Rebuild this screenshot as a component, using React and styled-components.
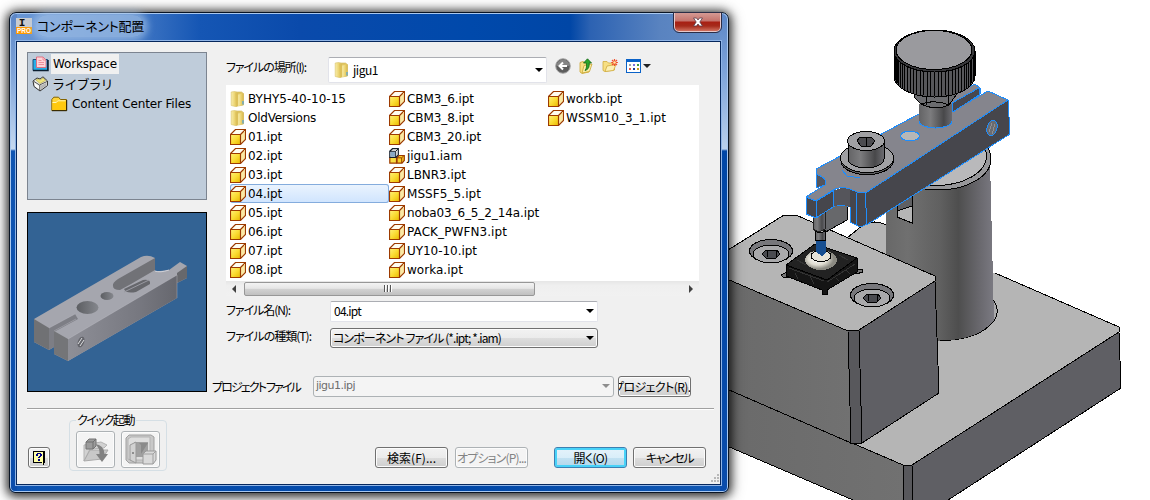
import React, { useLayoutEffect, useRef, useState } from "react";
import styled, { createGlobalStyle, css } from "styled-components";

const GlobalStyle = createGlobalStyle`
  * { box-sizing: border-box; }
  html, body { margin: 0; padding: 0; background: #fff; }
  body { overflow: hidden; }
`;

const uiFont = `"Noto Sans CJK JP", "Liberation Sans", sans-serif`;
const listFont = `"DejaVu Sans", "Noto Sans CJK JP", sans-serif`;

const Desktop = styled.div`
  position: relative;
  width: 1150px;
  height: 500px;
  overflow: hidden;
  background: #fff;
`;

const Scene = styled.svg`
  position: absolute;
  top: 0;
  left: 720px;
  display: block;
`;

/* ---------- text ---------- */

const TextSpan = styled.span`
  display: inline-block;
  flex: none;
  white-space: pre;
  font-family: ${(p) => (p.$list ? listFont : uiFont)};
  font-size: ${(p) => p.$size || 12}px;
  line-height: 18px;
  font-feature-settings: ${(p) => (p.$list ? "normal" : '"palt"')};
  color: ${(p) => p.$color || "#000"};
`;

/* Spreads a string over a fixed advance width by adjusting its tracking. */
function Text({ children, width, size, list, color }) {
  const ref = useRef(null);
  const [tracking, setTracking] = useState(0);
  useLayoutEffect(() => {
    if (!width) return;
    const natural = ref.current.getBoundingClientRect().width;
    setTracking((width - natural) / children.length);
  }, [width, children]);
  return (
    <TextSpan ref={ref} $size={size} $list={list} $color={color} style={{ letterSpacing: tracking }}>
      {children}
    </TextSpan>
  );
}

/* ---------- window ---------- */

const Window = styled.section`
  position: absolute;
  left: 9px;
  top: 12px;
  width: 720px;
  height: 481px;
  padding: 1px 7px 7px 6px;
  border: 1px solid #0a1524;
  border-radius: 7px 7px 6px 6px;
  background:
    linear-gradient(180deg, #5b86c6 0, #7ea4da 60px, #c6d9f0 136px, #0f55b2 138px, #0a4cab 100%) 0 0 / 7px 100% no-repeat,
    linear-gradient(180deg, #5b86c6 0, #7ea4da 60px, #b9d0ec 136px, #0046a6 138px, #0a4cab 100%) 100% 0 / 8px 100% no-repeat,
    linear-gradient(90deg, #6b98d6 0, #4d80c8 110px, #1556b4 190px, #0a4aab 290px, #0049ab 460px, #0046a6 560px, #2c62b2 580px, #5983c0 650px, #6790c8 100%) 0 0 / 100% 30px no-repeat,
    linear-gradient(90deg, #0d54b2, #0046a6 60%, #1259b4);
  box-shadow: inset 0 0 0 1px #a9c8ef, 0 1px 10px 2px rgba(0, 0, 0, 0.75), 0 2px 16px 2px rgba(0, 0, 0, 0.3);
  display: flex;
  flex-direction: column;
`;

const TitleBar = styled.header`
  flex: none;
  height: 26px;
  display: flex;
  align-items: flex-start;
`;

const AppIcon = styled.svg`
  margin: 4px 0 0;
  flex: none;
`;

const Title = styled.div`
  margin: 1px 0 0 4px;
  padding: 0 0 0 1px;
  height: 22px;
  display: flex;
  align-items: center;
  border-radius: 11px;
  background: rgba(170, 198, 232, 0.62);
  box-shadow: 0 0 7px 4px rgba(170, 198, 232, 0.62);
`;

const CloseButton = styled.button`
  margin: -1px 0 0 auto;
  width: 47px;
  height: 19px;
  padding: 0;
  border: 1px solid #e6c9cb;
  border-top: 0;
  border-radius: 0 0 5px 5px;
  outline: 1px solid #2b2d46;
  outline-offset: 0;
  background: linear-gradient(180deg, #d59a94 0, #c4736c 8px, #a81f13 9px, #a52b1c 13px, #d0715f 100%);
  display: flex;
  align-items: center;
  justify-content: center;
`;

const Client = styled.main`
  flex: 1;
  min-height: 0;
  margin-top: 1px;
  border: 1px solid #06275c;
  box-shadow: 0 0 0 1px #8fb4e6;
  background: #f0f0f0;
  padding: 10px 0 0 10px;
  display: flex;
  flex-direction: column;
`;

const Upper = styled.div`
  display: flex;
  height: 356px;
  flex: none;
`;

const Side = styled.aside`
  width: 180px;
  flex: none;
  display: flex;
  flex-direction: column;
  gap: 12px;
`;

const Tree = styled.div`
  height: 148px;
  padding: 1px 0 0 4px;
  border: 1px solid #7c8490;
  background: #bfccda;
`;

const TreeItem = styled.div`
  height: 20px;
  padding-left: ${(p) => (p.$level || 0) * 19}px;
  display: flex;
  align-items: center;
  gap: 2px;
`;

const TreeLabel = styled.div`
  height: 20px;
  padding: 0 2px;
  display: flex;
  align-items: center;
  background: ${(p) => (p.$selected ? "#f0f0f0" : "transparent")};
`;

const Preview = styled.div`
  height: 180px;
  border: 1px solid #000;
  background: #336394;
`;

const Form = styled.div`
  display: flex;
  flex-direction: column;
  padding-left: 5px;
`;

const FieldRow = styled.div`
  display: flex;
  align-items: center;
  flex: none;
  height: ${(p) => p.$h}px;
  margin-top: ${(p) => p.$mt || 0}px;
  padding-left: ${(p) => (p.$flush ? 0 : 14)}px;
`;

const FieldLabel = styled.div`
  width: ${(p) => p.$w}px;
  flex: none;
  display: flex;
  padding-bottom: ${(p) => p.$up || 0}px;
`;

const Combo = styled.div`
  width: ${(p) => p.$w}px;
  height: 100%;
  flex: none;
  display: flex;
  align-items: center;
  gap: 3px;
  padding: 0 3px 1px ${(p) => p.$pad || 3}px;
  border: 1px solid #e2e3ea;
  border-top-color: #abadb3;
  border-radius: 2px;
  background: #fff;
  ${(p) => p.$variant === "button" && css`
    border-color: #707070;
    border-radius: 3px;
    box-shadow: inset 0 0 0 1px #fcfcfc;
    background: linear-gradient(#f2f2f2 0, #ebebeb 50%, #dddddd 51%, #cfcfcf 100%);
  `}
  ${(p) => p.$variant === "disabled" && css`
    border-color: #adb2b5;
    border-radius: 3px;
    background: #f4f4f4;
  `}
`;

const Caret = styled.i`
  margin-left: auto;
  border: 4px solid transparent;
  border-top-color: ${(p) => p.$color || "#000"};
  border-bottom: 0;
`;

const Tools = styled.div`
  display: flex;
  align-items: center;
  margin-left: 8px;
  height: 18px;
  padding-bottom: 8px;
`;

const Tool = styled.div`
  display: flex;
  margin-right: ${(p) => p.$gap}px;
`;

const FileArea = styled.div`
  width: 473px;
  margin: 2px 0 0 14px;
  display: flex;
  flex-direction: column;
`;

const FileList = styled.div`
  height: 196px;
  padding: 4px 0 0 4px;
  background: #fff;
  display: grid;
  grid-auto-flow: column;
  grid-template-rows: repeat(10, 19px);
  grid-auto-columns: 159px;
`;

const FileItem = styled.div`
  height: 19px;
  display: flex;
  align-items: center;
  gap: 2px;
  border-radius: 3px;
  ${(p) => p.$selected && css`
    background: linear-gradient(#ebf4fe, #cfe4fe);
    box-shadow: inset 0 0 0 1px #84acdd;
  `}
`;

const ScrollBar = styled.div`
  height: 15px;
  display: flex;
  align-items: center;
  background: linear-gradient(#e6e6e6, #efefef 30%, #f1f1f1);
`;

const ScrollArrow = styled.i`
  border: 4px solid transparent;
  ${(p) => p.$dir === "left"
    ? css`border-right-color: #404040; border-left: 0; margin: 0 8px 0 6px;`
    : css`border-left-color: #404040; border-right: 0; margin: 0 6px 0 auto;`}
`;

const Thumb = styled.div`
  width: 291px;
  height: 14px;
  padding-right: 3px;
  border: 1px solid #979797;
  border-radius: 2px;
  background: linear-gradient(#f3f3f3 0, #e6e6e6 45%, #d2d2d2 50%, #c0c0c0 100%);
  display: flex;
  align-items: center;
  justify-content: center;
  gap: 1px;
`;

const Ridge = styled.i`
  width: 2px;
  height: 7px;
  border-left: 1px solid #555;
  background: #fff;
`;

const Button = styled.button`
  width: 73px;
  height: 21px;
  flex: none;
  padding: 0;
  margin-left: ${(p) => p.$ml || 0}px;
  display: flex;
  align-items: center;
  justify-content: center;
  overflow: hidden;
  border: 1px solid #707070;
  border-radius: 3px;
  box-shadow: inset 0 0 0 1px #fcfcfc;
  background: linear-gradient(#f2f2f2 0, #ebebeb 50%, #dddddd 51%, #cfcfcf 100%);
  ${(p) => p.$variant === "primary" && css`
    border-color: #3c7fb1;
    box-shadow: inset 0 0 0 2px #48d2f8;
    background: linear-gradient(#e5f3fb 0, #d9eef9 50%, #c3e2f2 51%, #b2d6ea 100%);
  `}
  ${(p) => p.$variant === "disabled" && css`
    border-color: #adb2b5;
    box-shadow: inset 0 0 0 1px #fcfcfc;
    background: #f4f4f4;
  `}
`;

const Divider = styled.hr`
  flex: none;
  width: 687px;
  margin: 0;
  border: 0;
  height: 2px;
  border-top: 1px solid #a0a0a0;
  background: #fff;
`;

const Footer = styled.footer`
  display: flex;
  flex: 1;
  align-items: flex-start;
`;

const HelpButton = styled(Button)`
  width: 22px;
  margin: 37px 19px 0 1px;
`;

const QuickStart = styled.fieldset`
  width: 98px;
  height: 60px;
  margin: 1px 0 0;
  padding: 2px 0 0 6px;
  border: 1px solid #d5dfe5;
  border-radius: 4px;
  display: flex;
  gap: 6px;
`;

const Legend = styled.legend`
  height: 18px;
  padding: 0 2px 0 1px;
`;

const QuickButton = styled(Button)`
  width: 39px;
  height: 37px;
`;

const Actions = styled.div`
  display: flex;
  margin: 37px 0 0 208px;
`;

const Grip = styled.svg`
  align-self: flex-end;
  margin: 0 0 1px 4px;
`;

/* ---------- icons ---------- */

const PartIcon = () => (
  <svg width="16" height="16" viewBox="0 0 16 16">
    <defs>
      <linearGradient id="partFace" x1="0" y1="0" x2="1" y2="1">
        <stop offset="0" stopColor="#fff27a" />
        <stop offset=".5" stopColor="#fbdc34" />
        <stop offset="1" stopColor="#e8b800" />
      </linearGradient>
    </defs>
    <path d="M1 5.5L5.5 1H15L10.5 5.5Z" fill="#fffdf0" />
    <path d="M10.5 5.5L15 1V10.5L10.5 15Z" fill="#fbe9a4" />
    <path d="M.5 5.5H10.5V15.5H.5Z" fill="url(#partFace)" />
    <path d="M.5 5.5L5.500 .5H15.500V10.500L10.500 15.500H.5ZM.5 5.500H10.500V15.500M10.500 5.500L15.500 .5" fill="none" stroke="#9c3a00" strokeWidth="1.150" />
  </svg>
);

const AssemblyIcon = () => (
  <svg width="16" height="16" viewBox="0 0 16 16">
    <path d="M8 9.5L10 7.500H15.300V12.500L13 15.200H8Z" fill="#f5cf28" stroke="#9c3a00" strokeWidth="1.200" />
    <path d="M.8 9.500H7.500V15.200H.8Z" fill="#f9dd43" stroke="#9c3a00" strokeWidth="1.200" />
    <path d="M8 9.800H12.700V15M12.700 9.800L15 7.500" fill="none" stroke="#9c3a00" />
    <path d="M.8 3.200L3.500 .7H9.300V6.800L6.800 9.300H.8Z" fill="#fff" stroke="#16202c" strokeWidth="1.200" />
    <path d="M1.400 3.800H6.300V8.700H1.400Z" fill="#89a9c6" />
    <path d="M.8 3.300H6.700V9M6.700 3.300L9.200 .9" fill="none" stroke="#16202c" />
  </svg>
);

const FolderIcon = () => (
  <svg width="16" height="16" viewBox="0 0 16 16">
    <defs>
      <linearGradient id="fold" x1="0" x2="1">
        <stop offset="0" stopColor="#f8edab" />
        <stop offset=".5" stopColor="#ecd574" />
        <stop offset="1" stopColor="#d6b64a" />
      </linearGradient>
    </defs>
    <path d="M6 1H11.500L13.500 2.500V14L8 15Z" fill="#e2c763" stroke="#cfb65c" strokeWidth=".6" />
    <path d="M1.200 1L5 .4L8 2V15L6 15.700L1.200 14.500Z" fill="url(#fold)" stroke="#d9c26a" strokeWidth=".6" />
    <path d="M5.500 2L8.200 3.500V14.500L6 15.500Z" fill="#dcc05a" />
    <path d="M8.200 3.500L13.500 2.500V14L8.200 15Z" fill="url(#fold)" />
    <path d="M13 10V13.500" stroke="#56a5d8" strokeWidth="1.300" />
  </svg>
);

const WorkspaceIcon = () => (
  <svg width="17" height="16" viewBox="0 0 17 16">
    <path d="M1 3.500H15.500V14.500H1Z" fill="#28aee8" stroke="#1c4f78" />
    <path d="M1 14.500H16V4" fill="none" stroke="#0b1e30" strokeWidth="1.500" />
    <path d="M4.500 1H11L14 4V11.500H4.500Z" fill="#ffd3d8" stroke="#e0687a" strokeWidth=".9" />
    <path d="M11 1V4H14M6.500 4.500H9.500M6.500 6.500H12M6.500 8.500H12" fill="none" stroke="#ea7d8d" strokeWidth=".8" />
  </svg>
);

const LibraryIcon = () => (
  <svg width="17" height="16" viewBox="0 0 17 16">
    <path d="M1 5L5 2L8 3L11 .8L15.500 5V9.500L8 15L2 10.500Z" fill="#e9e9e4" stroke="#333" />
    <path d="M2 5.500L7.500 9L15 5.500M7.800 9V14" fill="none" stroke="#555" />
    <path d="M4 4L6 3L8 4L11 2L13.500 4.500L8 7.500Z" fill="#efe47c" stroke="#b3a63c" strokeWidth=".6" />
    <path d="M3 7.500L6.800 10V13L3 10Z" fill="#fff" />
    <path d="M9 9.500L14.500 6.800V9.300L9 13.200Z" fill="#b5b5b5" />
  </svg>
);

const YellowFolderIcon = () => (
  <svg width="17" height="16" viewBox="0 0 17 16">
    <path d="M.8 14.500V3.500L2.800 1.200H7.500L9.500 3.500H15.500V14.500Z" fill="#ffd53a" stroke="#836300" />
    <path d="M1.500 6H5L7 4.200H15V14H1.500Z" fill="#ffc90e" />
    <path d="M1.500 6.500H5L7 4.800H14.500" fill="none" stroke="#fff7b4" />
    <path d="M1 14.700H15.700V4" fill="none" stroke="#2a2100" />
  </svg>
);

const BackIcon = () => (
  <svg width="16" height="16" viewBox="0 0 16 16">
    <circle cx="8" cy="8" r="7.300" fill="#5d5d5d" stroke="#a6a6a6" />
    <path d="M1.500 8A6.500 6.500 0 0 1 14.500 8Z" fill="#858585" />
    <path d="M12 8H5M8 4.500L4.500 8L8 11.500" fill="none" stroke="#fff" strokeWidth="2" />
  </svg>
);

const UpIcon = () => (
  <svg width="15" height="16" viewBox="0 0 15 16">
    <path d="M1 4.500L4 3.500L5.500 4.500L10 4V14L3 15.500L1 14Z" fill="#f7df83" stroke="#c9a530" strokeWidth=".8" />
    <path d="M3 15L5 7.500L13 6L10.500 13.500Z" fill="#fbeeaa" stroke="#c9a530" strokeWidth=".8" />
    <path d="M4.500 5L8.500 .8L12.500 5H10.200C10.500 9 9.500 11.500 6 12.500C7.800 10 7.700 8 7.300 5Z" fill="#2ba52b" stroke="#146614" strokeWidth=".8" />
  </svg>
);

const NewFolderIcon = () => (
  <svg width="17" height="16" viewBox="0 0 17 16">
    <path d="M1 3.500H5L6.500 5H12.500V12L3 13.500L1 12.500Z" fill="#f7df83" stroke="#cfab3d" strokeWidth=".8" />
    <path d="M3 13.500L5 8L14 6.500L11.500 12.500Z" fill="#fcf0b4" stroke="#cfab3d" strokeWidth=".8" />
    <path d="M12.500 1V8M9.200 4.500H15.900M10 2L15 7M15 2L10 7" stroke="#f0502d" strokeWidth="1.200" />
    <circle cx="12.500" cy="4.500" r="1.300" fill="#ffe9a0" />
  </svg>
);

const ViewIcon = () => (
  <svg width="15" height="14" viewBox="0 0 15 14" shapeRendering="crispEdges">
    <rect x=".5" y=".5" width="14" height="13" fill="#fff" stroke="#0a62c8" />
    <rect width="15" height="3" fill="#0a62c8" />
    <path d="M3 5h2v2H3z" fill="#9aa2a8" /><path d="M7 5h2v2H7z" fill="#7c6fe0" /><path d="M11 5h2v2h-2z" fill="#3d9a3d" />
    <path d="M3 9h2v2H3z" fill="#e0574a" /><path d="M7 9h2v2H7z" fill="#1d3a9a" /><path d="M11 9h2v2h-2z" fill="#c79c1c" />
  </svg>
);

const HelpIcon = () => (
  <svg width="14" height="15" viewBox="0 0 14 15" shapeRendering="crispEdges">
    <path d="M1 1h12v12h-1v2h-1v-1h-1v-1H1z" fill="#000" />
    <path d="M2 2h9v10H2z" fill="#ffffa6" />
    <path d="M10 12h1v2h-1z" fill="#ffffa6" />
    <path d="M4 4h1V3h4v1h1v2H9v1H8v1H6V7h1V6h1V4H6v2H4zM6 9h2v2H6z" fill="#00008a" />
  </svg>
);

const QuickFolderIcon = () => (
  <svg width="27" height="26" viewBox="0 0 27 26">
    <path d="M2 8V24L8 12L22 11L25 8L19 5Z" fill="#d2d2d2" stroke="#b4b4b4" />
    <path d="M2 24L8 13H26L20 22Z" fill="#c8c8c8" stroke="#aaa" />
    <path d="M4 5L7 2H14V9L11 12H4Z" fill="#9c9c9c" stroke="#747474" />
    <path d="M4 5H11V12M11 5L14 2" fill="none" stroke="#707070" />
    <path d="M13 7Q22 8 22.500 17H26L20 25L14 17H17.500Q18 11 13 7Z" fill="#828282" />
  </svg>
);

const VaultIcon = () => (
  <svg width="33" height="32" viewBox="0 0 33 32">
    <path d="M2 4L5 1H27L30 3V26L27 29H5L2 26Z" fill="#c8c8c8" stroke="#a0a0a0" />
    <path d="M4 5L7 3H26V26H6L4 25Z" fill="#dedede" stroke="#b4b4b4" />
    <path d="M10 8H24V23H10Z" fill="#a0a0a0" />
    <path d="M15 9H24L17 20V11Z" fill="#8a8a8a" />
    <path d="M6 11L12 8V29L6 26Z" fill="#d2d2d2" stroke="#999" />
    <circle cx="9" cy="19" r="1" fill="#777" />
    <path d="M19 20L22 17H32V26L29 30H19Z" fill="#dadada" stroke="#999" />
    <path d="M19 20H29V30M29 20L32 17" fill="none" stroke="#a0a0a0" />
  </svg>
);

/* ---------- drawings ---------- */

function PartPreview() {
  return (
    <svg width="178" height="178" viewBox="28 213 178 178">
      <defs>
        <linearGradient id="pvSide" x1="0" x2="1"><stop offset="0" stopColor="#8e8f97" /><stop offset=".65" stopColor="#777880" /><stop offset="1" stopColor="#66676e" /></linearGradient>
        <linearGradient id="pvHole" x1="0" x2="1"><stop offset="0" stopColor="#5c5e62" /><stop offset="1" stopColor="#85878d" /></linearGradient>
      </defs>
      <path d="M34 319L141 257Q148 254 155 258V271L160 271L169 270L180 262L187 266V278L177 283V298L68 361L54 354V347L49 350L34 342Z" fill="#a5a6ae" />
      <path d="M34 319L49 328V350L34 342Z" fill="#707174" />
      <path d="M49 328L75 314L78 319L54 332V347L49 350Z" fill="#7d7e85" />
      <path d="M54 331L68 339V361L54 354Z" fill="#747578" />
      <path d="M68 339L177 275V298L68 361Z" fill="url(#pvSide)" />
      <path d="M177 273L187 266V278L177 283Z" fill="#67686c" />
      <path d="M155 258V270L131 284L120 290Q113 290 113 286Q112 283 118 279Z" fill="#717277" />
      <path d="M124 289L143 280Q151 279 150 284L136 292Q126 294 124 289Z" fill="#66676c" />
      <path d="M124 292L149 280" stroke="#999aa2" />
      <ellipse cx="87.500" cy="307.500" rx="11" ry="6.500" fill="url(#pvHole)" />
      <ellipse cx="107" cy="296" rx="6.500" ry="4" fill="url(#pvHole)" />
      <path d="M155 271Q160 273 169 270" fill="none" stroke="#d0d1d8" />
      <path d="M49 328L75 314M68 339L177 275M54 331L76 319M177 275V298" fill="none" stroke="#c0c1c8" strokeWidth=".4" />
      <ellipse cx="81" cy="342" rx="3.200" ry="5.500" transform="rotate(20 81 342)" fill="#63646a" />
      <path d="M78 344L82 338M80 346L84 340" stroke="#dcdde0" />
    </svg>
  );
}

function FixtureScene() {
  const knurls = [];
  for (let i = 0; i <= 34; i++) {
    const a = Math.PI * (i / 34);
    const x = 934.5 - 40 * Math.cos(a);
    const drop = 20 * Math.sin(a);
    knurls.push(`M${x.toFixed(1)} ${(52 + drop).toFixed(1)}V${(76 + drop).toFixed(1)}`);
  }
  const bore = (cx, cy) => (
    <g stroke="#000">
      <ellipse cx={cx} cy={cy} rx="21.500" ry="11.500" fill="#77777b" />
      <ellipse cx={cx} cy={cy + 3} rx="18" ry="9" fill="#a9a9ab" />
      <path d={`M${cx - 9} ${cy + 3}L${cx - 5} ${cy - 1}H${cx + 6}L${cx + 9} ${cy + 3}L${cx + 5} ${cy + 7}H${cx - 5}Z`} fill="#4a4b50" />
      <path d={`M${cx - 4} ${cy - 1}V${cy + 6}M${cx + 5} ${cy}V${cy + 6}`} />
    </g>
  );
  return (
    <Scene width="430" height="500" viewBox="720 0 430 500" shapeRendering="crispEdges">
      <defs>
        <linearGradient id="post" x1="0" x2="1"><stop offset="0" stopColor="#686868" /><stop offset=".2" stopColor="#707070" /><stop offset=".5" stopColor="#606060" /><stop offset=".67" stopColor="#4e4e4e" /><stop offset=".85" stopColor="#67666b" /><stop offset="1" stopColor="#7b7a82" /></linearGradient>
        <linearGradient id="stem" x1="0" x2="1"><stop offset="0" stopColor="#636365" /><stop offset=".35" stopColor="#7c7c7e" /><stop offset=".75" stopColor="#48484a" /><stop offset="1" stopColor="#6b6b70" /></linearGradient>
        <linearGradient id="front" x1="0" x2="1"><stop offset="0" stopColor="#6a6a6a" /><stop offset="1" stopColor="#717171" /></linearGradient>
        <radialGradient id="ball" cx=".4" cy=".45"><stop offset="0" stopColor="#fff" /><stop offset=".6" stopColor="#dedbd0" /><stop offset="1" stopColor="#8b8a82" /></radialGradient>
      </defs>

      <path d="M720 300L995 273L1119 327V332L912 465H903L720 386Z" fill="#b5b5b5" />
      <path d="M847 238L863 225Q874 219 887 225V256Z" fill="#b5b5b5" />
      <path d="M847 238L863 225Q874 219 887 225M995 273L1119 327V332L912 465H903L720 386" fill="none" stroke="#000" />
      <path d="M720 386L903 465L904 500L853 500L720 443Z" fill="url(#front)" stroke="#000" />
      <path d="M903 465H912L913 502H904Z" fill="#58585c" stroke="#000" />
      <path d="M912 465L1119 332L1121 388L945 502H913Z" fill="#5f5f64" stroke="#000" />

      <path d="M990 296Q1002 309 994 321Q978 341 938 340.500V300Z" fill="#a8a8aa" stroke="#000" />
      <path d="M886 165L990 160L994 320Q978 341 938 340.500L886 320Z" fill="url(#post)" />
      <ellipse cx="938" cy="159" rx="53" ry="31" fill="#97979a" stroke="#000" />
      <ellipse cx="936" cy="156" rx="50.500" ry="29.500" fill="#b9b9bb" stroke="#000" />
      <path d="M886 165V212L897 205V178Z" fill="#686868" />
      <path d="M897 207L912 197V223L897 217Z" fill="#b5b5b5" stroke="#000" />
      <path d="M897 201L912 194V206L897 211Z" fill="#5f6063" stroke="#000" />

      <path d="M824 233V208L847 202V220Z" fill="#67686b" stroke="#000" />
      <path d="M720 255L784 215H796L935 276V281L859 330L848 331L720 276Z" fill="#b5b5b5" stroke="#000" />
      <path d="M720 276L848 331L851 443L720 386Z" fill="url(#front)" stroke="#000" />
      <path d="M848 331L859 330L862 443H851Z" fill="#58585c" stroke="#000" />
      <path d="M859 330L935 281L939 393L862 443Z" fill="#5f5f64" stroke="#000" />
      <path d="M824 233V208L847 202V220Z" fill="#67686b" stroke="#000" />
      {bore(771, 251)}
      {bore(872, 295)}

      <path d="M781 275L787 272L791 277L784 278ZM853 271L862 269L863 272L856 274Z" fill="#777" stroke="#000" />
      <path d="M786 265L815 244L857 258V272L827 290V294H822V290L786 276Z" fill="#151515" stroke="#000" />
      <path d="M786 265L815 244L857 258L827 280Z" fill="#222" stroke="#000" />
      <path d="M789 268L824 281M827 282L855 264M795 273L798 279M810 276L814 284M836 278L839 281M846 270L850 274M797 260L806 265M839 255L848 260" stroke="#333" />
      <ellipse cx="821" cy="260" rx="16" ry="10" fill="url(#ball)" />
      <ellipse cx="821" cy="256" rx="10" ry="5.500" fill="#e6e3d8" stroke="#000" />
      <path d="M816 241H826V252L822 256L816 252Z" fill="#174f91" />
      <path d="M813 205V229Q819 234 825 229V205Z" fill="url(#stem)" stroke="#222" />
      <path d="M815 231V240H825V231Q820 235 815 231Z" fill="url(#stem)" stroke="#000" />

      <path d="M806 197L816 201L833 191L850 189L867 192L1008 100L1010 134L868 224L860 227L850 222V207Q840 203 833 207L816 218L806 214Z" fill="#46464c" stroke="#1e8dfc" />
      <path d="M833 191Q842 186 850 189V207Q840 203 833 207Z" fill="#55555b" />
      <path d="M816 169L975 84L980 88V94L953 111L988 91L1008 100L867 192H857L850 189Q840 186 833 190L816 201L806 197L823 186Q829 180 816 175Z" fill="#85858d" stroke="#1e8dfc" />
      <path d="M816 169V188L825 185Q829 179 816 174Z" fill="#54555d" stroke="#1e8dfc" />
      <path d="M952 103L979 88V95L953 112Z" fill="#47474e" stroke="#1e8dfc" />
      <path d="M816 201V218M833 191V207M850 207V222M856 192L857 225M865 192L867 224" stroke="#1e8dfc" />
      <ellipse cx="910" cy="136" rx="9.500" ry="5" fill="#b7b7b7" stroke="#1e8dfc" />
      <ellipse cx="992" cy="128" rx="5" ry="8" transform="rotate(15 992 128)" fill="#6b6c70" stroke="#1e8dfc" />
      <path d="M989 132L992 123M992 134L995 124" stroke="#8f9094" />

      <path d="M919 104V121A16.500 7 0 0 0 952 121V104Z" fill="url(#stem)" />
      <path d="M919 121A16.500 7 0 0 0 952 121" fill="none" stroke="#1e8dfc" />
      <path d="M914 90V97L921 104Q935 111 949 105L956 95V90Z" fill="#6b6c6f" stroke="#000" />
      <path d="M926 90V105M948 90V105M921 104Q935 99 949 105" fill="none" stroke="#000" />
      <path d="M894 51V76A40.500 21 0 0 0 975 76V51Z" fill="#57575a" stroke="#000" />
      <path d={knurls.join("")} stroke="#000" />
      <ellipse cx="934.500" cy="51" rx="40.500" ry="21" fill="#37373a" stroke="#000" />
      <ellipse cx="934" cy="50" rx="38" ry="19.500" fill="#9a9a9e" stroke="#000" />

      <path d="M841 158V163A26.500 14.500 0 0 0 893 163V158Z" fill="#5e5e61" stroke="#000" />
      <ellipse cx="867" cy="158" rx="26.500" ry="14.500" fill="#a0a0a3" stroke="#000" />
      <path d="M842 170L847 176L860 178" fill="none" stroke="#1e8dfc" />
      <path d="M848 141V159A18 9 0 0 0 884 159V141Z" fill="url(#stem)" stroke="#000" />
      <ellipse cx="866" cy="141" rx="18.500" ry="9.500" fill="#a0a0a3" stroke="#000" />
      <path d="M857 141L860 137H871L875 141L871 146H861Z" fill="#4c4c50" stroke="#000" />
      <path d="M866 137V146" stroke="#000" />
    </Scene>
  );
}

/* ---------- data ---------- */

const files = [
  ["BYHY5-40-10-15", 98, "folder"], ["OldVersions", 68, "folder"],
  ["01.ipt", 34], ["02.ipt", 34], ["03.ipt", 34], ["04.ipt", 34], ["05.ipt", 34], ["06.ipt", 34], ["07.ipt", 34], ["08.ipt", 34],
  ["CBM3_6.ipt", 67], ["CBM3_8.ipt", 67], ["CBM3_20.ipt", 74], ["jigu1.iam", 55, "assembly"], ["LBNR3.ipt", 59],
  ["MSSF5_5.ipt", 74], ["noba03_6_5_2_14a.ipt", 132], ["PACK_PWFN3.ipt", 100], ["UY10-10.ipt", 70], ["worka.ipt", 56],
  ["workb.ipt", 56], ["WSSM10_3_1.ipt", 100],
];

const fileIcons = { folder: FolderIcon, assembly: AssemblyIcon, part: PartIcon };

export default function App() {
  return (
    <Desktop>
      <GlobalStyle />
      <FixtureScene />
      <Window>
        <TitleBar>
          <AppIcon width="16" height="16" viewBox="0 0 16 16">
            <rect width="16" height="9" fill="#c9ccd0" />
            <rect y="9" width="16" height="7" fill="#ff9a00" />
            <text x="6" y="8.300" textAnchor="middle" fontFamily="Liberation Mono, monospace" fontWeight="700" fontSize="11" fill="#111">I</text>
            <text x="8" y="15.200" textAnchor="middle" fontFamily="Liberation Sans, sans-serif" fontWeight="700" fontSize="6.500" fill="#fff">PRO</text>
          </AppIcon>
          <Title><Text width={107} size={13}>コンポーネント配置</Text></Title>
          <CloseButton aria-label="閉じる">
            <svg width="12" height="10" viewBox="0 0 12 10">
              <path d="M1.500 1H4.500L6 3L7.500 1H10.500L7.800 5L10.500 9H7.500L6 7L4.500 9H1.500L4.200 5Z" fill="#fff" stroke="#5a3a48" strokeWidth=".8" />
            </svg>
          </CloseButton>
        </TitleBar>
        <Client>
          <Upper>
            <Side>
              <Tree>
                <TreeItem><WorkspaceIcon /><TreeLabel $selected><Text list width={64}>Workspace</Text></TreeLabel></TreeItem>
                <TreeItem><LibraryIcon /><TreeLabel><Text width={60} size={13}>ライブラリ</Text></TreeLabel></TreeItem>
                <TreeItem $level={1}><YellowFolderIcon /><TreeLabel><Text list width={119}>Content Center Files</Text></TreeLabel></TreeItem>
              </Tree>
              <Preview><PartPreview /></Preview>
            </Side>
            <Form>
              <FieldRow $h={26} $mt={5}>
                <FieldLabel $w={102} $up={6}><Text width={80}>ファイルの場所(I):</Text></FieldLabel>
                <Combo $w={219} $pad={5}><FolderIcon /><Text width={25}>jigu1</Text><Caret /></Combo>
                <Tools>
                  <Tool $gap={8}><BackIcon /></Tool>
                  <Tool $gap={8}><UpIcon /></Tool>
                  <Tool $gap={7}><NewFolderIcon /></Tool>
                  <Tool $gap={2}><ViewIcon /></Tool>
                  <Caret $color="#222" />
                </Tools>
              </FieldRow>
              <FileArea>
                <FileList>
                  {files.map(([name, width, kind = "part"]) => {
                    const Icon = fileIcons[kind];
                    return (
                      <FileItem key={name} $selected={name === "04.ipt"}>
                        <Icon /><Text list width={width}>{name}</Text>
                      </FileItem>
                    );
                  })}
                </FileList>
                <ScrollBar>
                  <ScrollArrow $dir="left" />
                  <Thumb><Ridge /><Ridge /><Ridge /></Thumb>
                  <ScrollArrow $dir="right" />
                </ScrollBar>
              </FileArea>
              <FieldRow $h={21} $mt={5}>
                <FieldLabel $w={104} $up={3}><Text width={64}>ファイル名(N):</Text></FieldLabel>
                <Combo $w={268}><Text width={27}>04.ipt</Text><Caret /></Combo>
              </FieldRow>
              <FieldRow $h={20} $mt={6}>
                <FieldLabel $w={104} $up={4}><Text width={85}>ファイルの種類(T):</Text></FieldLabel>
                <Combo $w={268} $pad={2} $variant="button"><Text width={168}>コンポーネント ファイル (*.ipt; *.iam)</Text><Caret /></Combo>
              </FieldRow>
              <FieldRow $h={21} $mt={28} $flush>
                <FieldLabel $w={101}><Text width={88}>プロジェクト ファイル</Text></FieldLabel>
                <Combo $w={301} $pad={2} $variant="disabled"><Text list size={11} width={39} color="#6d6d6d">jigu1.ipj</Text><Caret $color="#8d8d8d" /></Combo>
                <Button $ml={4}><Text width={83}>プロジェクト(R)...</Text></Button>
              </FieldRow>
            </Form>
          </Upper>
          <Divider />
          <Footer>
            <HelpButton aria-label="ヘルプ"><HelpIcon /></HelpButton>
            <QuickStart>
              <Legend><Text width={57}>クイック起動</Text></Legend>
              <QuickButton $variant="disabled"><QuickFolderIcon /></QuickButton>
              <QuickButton $variant="disabled"><VaultIcon /></QuickButton>
            </QuickStart>
            <Actions>
              <Button><Text width={49}>検索(F)...</Text></Button>
              <Button $ml={7} $variant="disabled"><Text width={69} color="#838383">オプション(P)...</Text></Button>
              <Button $ml={26} $variant="primary"><Text width={34}>開く(O)</Text></Button>
              <Button $ml={6}><Text width={47}>キャンセル</Text></Button>
            </Actions>
            <Grip width="10" height="10" viewBox="0 0 10 10" shapeRendering="crispEdges">
              <path d="M7 1h2v2H7zM4 4h2v2H4zM7 4h2v2H7zM1 7h2v2H1zM4 7h2v2H4zM7 7h2v2H7z" fill="#b8b8b8" />
            </Grip>
          </Footer>
        </Client>
      </Window>
    </Desktop>
  );
}
